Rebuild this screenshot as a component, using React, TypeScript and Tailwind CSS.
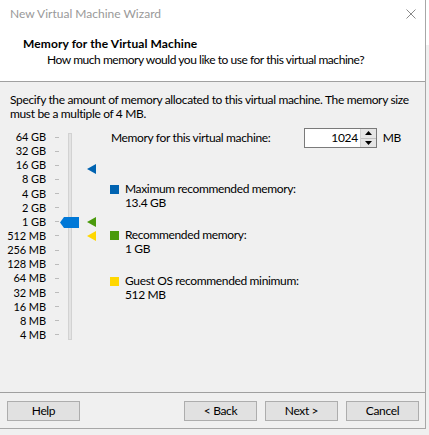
import React from "react";

const SCALE = ["64 GB", "32 GB", "16 GB", "8 GB", "4 GB", "2 GB", "1 GB", "512 MB", "256 MB", "128 MB", "64 MB", "32 MB", "16 MB", "8 MB", "4 MB"];
const STEP = 14.14;

// position on the log scale, 64 GB at the top
const yFor = (mb: number) => 7 + Math.log2(65536 / mb) * STEP;

function Marker({ mb, color }: { mb: number; color: string }) {
  return (
    <svg
      width="9"
      height="10"
      viewBox="0 0 9 10"
      className="absolute left-[87px]"
      style={{ top: yFor(mb) - 5 }}
    >
      <polygon points="0,5 9,0 9,10" fill={color} />
    </svg>
  );
}

function Legend({ color, label, value }: { color: string; label: string; value: string }) {
  return (
    <div className="flex">
      <div className={`w-[9px] h-[9px] mt-[3px] ${color}`} />
      <div className="ml-[6px] leading-[14px]">
        <div>{label}</div>
        <div>{value}</div>
      </div>
    </div>
  );
}

function Button({ children }: { children: React.ReactNode }) {
  return (
    <button className="w-[73px] h-[20px] bg-[#e1e1e1] border border-[#adadad] text-[12px] leading-[18px] text-black">
      {children}
    </button>
  );
}

export default function App() {
  return (
    <div className="w-[429px] h-[435px] bg-[#f0f0f0] flex text-[12px] tracking-[-0.35px] text-black overflow-hidden font-['Lato',sans-serif]">
      <div className="w-[426px] h-[429px] shrink-0 flex flex-col border-r border-b border-[#a7a7a7] bg-[#f0f0f0]">
        {/* title bar + header */}
        <div className="bg-white h-[82px] border-b border-[#a0a0a0] flex flex-col">
          <div className="h-[28px] flex items-center justify-between pl-[10px] pr-[9px]">
            <span className="text-[#999999] tracking-normal">New Virtual Machine Wizard</span>
            <svg width="10" height="10" viewBox="0 0 10 10">
              <path d="M0.5 0.5 L9.5 9.5 M9.5 0.5 L0.5 9.5" stroke="#8a8a8a" strokeWidth="1" />
            </svg>
          </div>
          <div className="pl-[23px] pt-[8px] leading-[16px] font-bold tracking-[0.1px]">Memory for the Virtual Machine</div>
          <div className="pl-[47px] leading-[16px] tracking-[-0.45px]">How much memory would you like to use for this virtual machine?</div>
        </div>

        {/* body */}
        <div className="flex-1 flex flex-col">
          <p className="px-[10px] pt-[11px] leading-[14px]">
            Specify the amount of memory allocated to this virtual machine. The memory size must be a multiple of 4 MB.
          </p>

          <div className="flex mt-[9px]">
            {/* slider */}
            <div className="relative w-[100px] h-[212px] shrink-0">
              <div className="absolute left-0 top-0 w-[46px] h-[212px] flex flex-col justify-between text-right text-[11px] tracking-[-0.1px]">
                {SCALE.map((s) => (
                  <div key={s} className="h-[14px] leading-[14px]">{s}</div>
                ))}
              </div>
              <div className="absolute left-[55px] top-0 w-[4px] h-[212px] flex flex-col justify-between">
                {SCALE.map((s) => (
                  <div key={s} className="h-[14px] flex items-center">
                    <div className="w-[4px] h-px bg-[#bcbcbc]" />
                  </div>
                ))}
              </div>
              <div className="absolute left-[68px] top-[3px] w-[4px] h-[207px] bg-[#e3e3e3] border border-[#d2d2d2]" />
              <svg width="19" height="11" viewBox="0 0 19 11" className="absolute left-[60px]" style={{ top: yFor(1024) - 5 }}>
                <polygon points="0,5.5 4,0 19,0 19,11 4,11" fill="#0078d7" />
              </svg>
              <Marker mb={13722} color="#0063b1" />
              <Marker mb={1024} color="#4a9a0c" />
              <Marker mb={512} color="#ffd700" />
            </div>

            {/* values */}
            <div className="flex-1 pl-[10px] flex flex-col">
              <div className="flex items-center h-[20px] -mt-[2px]">
                <span className="pl-px">Memory for this virtual machine:</span>
                <div className="ml-auto flex h-[20px] border border-[#7a7a7a]">
                  <div className="w-[55px] bg-white text-right pr-[2px] leading-[18px]">1024</div>
                  <div className="w-[16px] flex flex-col bg-[#f0f0f0] border-l border-[#d0d0d0]">
                    <div className="flex-1 flex items-center justify-center bg-[#e5e5e5] border-b border-[#c0c0c0]">
                      <svg width="7" height="4" viewBox="0 0 7 4"><polygon points="0,4 3.5,0 7,4" fill="#000" /></svg>
                    </div>
                    <div className="flex-1 flex items-center justify-center bg-[#e5e5e5]">
                      <svg width="7" height="4" viewBox="0 0 7 4"><polygon points="0,0 3.5,4 7,0" fill="#000" /></svg>
                    </div>
                  </div>
                </div>
                <span className="ml-[6px] mr-[24px]">MB</span>
              </div>

              <div className="mt-[34px] flex flex-col gap-[18px]">
                <Legend color="bg-[#0063b1]" label="Maximum recommended memory:" value="13.4 GB" />
                <Legend color="bg-[#4a9a0c]" label="Recommended memory:" value="1 GB" />
                <Legend color="bg-[#ffd700]" label="Guest OS recommended minimum:" value="512 MB" />
              </div>
            </div>
          </div>

          {/* footer */}
          <div className="mt-auto border-t border-[#a0a0a0] h-[36px] flex items-start pt-[8px] px-[7px] pr-[6px]">
            <Button>Help</Button>
            <div className="ml-auto flex gap-[8px]">
              <Button>&lt; Back</Button>
              <Button>Next &gt;</Button>
              <Button>Cancel</Button>
            </div>
          </div>
        </div>
      </div>
      <div className="flex-1 flex flex-col">
        <div className="h-[45px] bg-white" />
      </div>
    </div>
  );
}
